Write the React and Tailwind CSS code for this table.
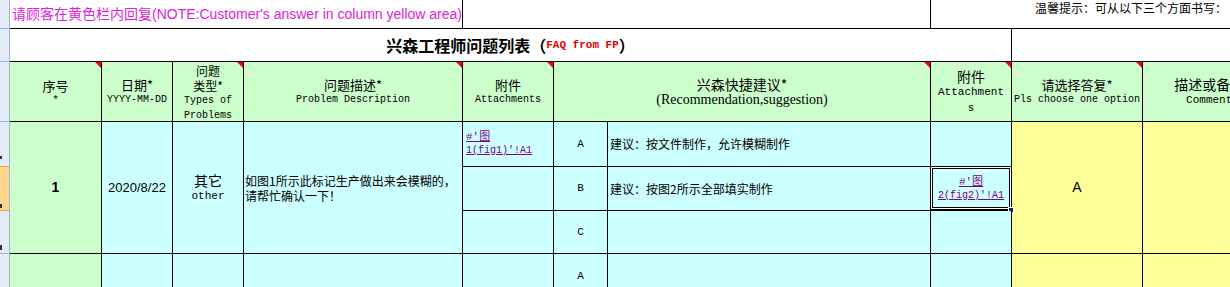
import React from 'react';

const cjk = "font-['Noto_Sans_CJK_SC','Noto_Sans',sans-serif]";
const mono = "font-['Liberation_Mono','Noto_Sans_CJK_SC',monospace]";
const arial = "font-['Liberation_Sans','Noto_Sans_CJK_SC',sans-serif]";
const serif = "font-['Liberation_Serif','Noto_Sans_CJK_SC',serif]";

const cell = 'relative border-r border-b border-black overflow-hidden';
const head = `${cell} bg-[#ccffcc] flex flex-col items-center justify-center text-center text-black`;
const blue = `${cell} bg-[#ccffff]`;
const yellow = `${cell} bg-[#ffff99]`;

// red comment marker in the corner
const Note = () => (
  <span className="absolute top-0 right-0 w-0 h-0 border-l-[6px] border-l-transparent border-t-[6px] border-t-[#ff0000]" />
);

const Link = ({ b, center }) => (
  <div className={`flex flex-col ${center ? 'items-center' : 'items-start'} text-[#800080] underline leading-[14px]`}>
    <span className={`${mono} text-[11px]`}>#'图</span>
    <span className={`${mono} text-[10px]`}>{b}</span>
  </div>
);

const Letter = ({ v }) => (
  <div className={`${blue} flex items-center justify-center ${mono} text-[11px]`}>{v}</div>
);

const GroupRow = ({ first }) => (
  <>
    <div className={`${cell} bg-[#ccffcc] row-span-3 flex items-center justify-center ${arial} font-bold text-[14px]`}>
      {first && '1'}
    </div>
    <div className={`${blue} row-span-3 flex items-center justify-center ${arial} text-[13px]`}>
      {first && '2020/8/22'}
    </div>
    <div className={`${blue} row-span-3 flex flex-col items-center justify-center leading-[16px]`}>
      {first && (
        <>
          <span className={`${cjk} text-[14px]`}>其它</span>
          <span className={`${mono} text-[11px]`}>other</span>
        </>
      )}
    </div>
    <div className={`${blue} row-span-3 flex flex-col justify-center pl-px ${cjk} text-[12px] leading-[15px]`}>
      {first && (
        <>
          <span>如图1所示此标记生产做出来会模糊的，</span>
          <span>请帮忙确认一下！</span>
        </>
      )}
    </div>
    <div className={`${blue} flex items-center pl-[3px]`}>
      {first && <Link b="1(fig1)'!A1" />}
    </div>
    <Letter v="A" />
    <div className={`${blue} flex items-center pl-[2px] ${cjk} text-[12px]`}>
      {first && '建议：按文件制作，允许模糊制作'}
    </div>
    <div className={blue} />
    <div className={`${yellow} row-span-3 flex items-center justify-center ${arial} text-[14px]`}>
      {first && 'A'}
    </div>
    <div className={`${yellow} row-span-3`} />

    <div className={blue} />
    <Letter v="B" />
    <div className={`${blue} flex items-center pl-[2px] ${cjk} text-[12px]`}>
      {first && '建议：按图2所示全部填实制作'}
    </div>
    <div className={`${blue} overflow-visible flex items-center justify-center`}>
      {first && (
        <>
          <Link b="2(fig2)'!A1" center />
          {/* selected cell frame */}
          <div className="absolute -left-px -top-px -right-px bottom-0 border border-black">
            <div className="h-full border border-white">
              <div className="h-full border border-black" />
            </div>
          </div>
          <div className="absolute -right-[3px] -bottom-[3px] w-[6px] h-[6px] bg-[#202060] border border-white" />
        </>
      )}
    </div>

    <div className={blue} />
    <Letter v="C" />
    <div className={blue} />
    <div className={blue} />
  </>
);

export default function App() {
  return (
    <div className="w-[1230px] h-[287px] overflow-hidden bg-white flex text-black">
      {/* row header strip */}
      <div className="w-[10px] shrink-0 flex flex-col bg-[#e4ecf7] border-r border-[#9eb6ce]">
        <div className="h-[29px] shrink-0 border-b border-[#9eb6ce]" />
        <div className="h-[33px] shrink-0 border-b border-[#9eb6ce]" />
        <div className="h-[60px] shrink-0 border-b border-[#9eb6ce]" />
        <div className="h-[44px] shrink-0 flex items-end pb-[7px]">
          <div className="w-[2px] h-[3px] bg-[#333]" />
        </div>
        <div className="h-[45px] shrink-0 flex items-end pb-[2px] bg-[#ffd58d] border-y border-[#f2a144]">
          <div className="w-[2px] h-[4px] bg-[#333]" />
        </div>
        <div className="h-[43px] shrink-0 flex items-end pb-[3px] border-b border-[#9eb6ce]">
          <div className="w-[2px] h-[5px] bg-[#333]" />
        </div>
        <div className="flex-1" />
      </div>

      <div className="shrink-0 grid grid-cols-[92px_71px_71px_219px_91px_54px_323px_81px_131px_140px] grid-rows-[29px_33px_60px_45px_44px_43px_45px_44px_43px]">
        {/* row 1 */}
        <div className={`${cell} col-span-4 flex items-center pl-[2px] ${arial} text-[14px] text-[#dd22dd] whitespace-nowrap`}>
          请顾客在黄色栏内回复(NOTE:Customer's answer in column yellow area)
        </div>
        <div className={`${cell} col-span-3`} />
        <div className={`relative border-b border-black col-span-3 pl-[104px] ${cjk} text-[12px] leading-[15px] whitespace-nowrap overflow-hidden`}>
          温馨提示：可从以下三个方面书写：
        </div>

        {/* row 2 title */}
        <div className={`${cell} col-span-8 flex items-center justify-center whitespace-nowrap`}>
          <span className={`${cjk} font-bold text-[16px]`}>兴森工程师问题列表（</span>
          <span className={`${mono} font-bold text-[11px] text-[#dd0000]`}>FAQ from FP</span>
          <span className={`${cjk} font-bold text-[16px]`}>）</span>
        </div>
        <div className="col-span-2 border-b border-black" />

        {/* row 3 header */}
        <div className={`${head} leading-[15px] pt-[2px]`}>
          <Note />
          <span className={`${cjk} text-[13px]`}>序号</span>
          <span className={`${mono} text-[11px]`}>*</span>
        </div>
        <div className={`${head} leading-[15px]`}>
          <span className={`${cjk} text-[13px]`}>日期*</span>
          <span className={`${mono} text-[10px]`}>YYYY-MM-DD</span>
        </div>
        <div className={`${head} leading-[15px] pt-[2px]`}>
          <Note />
          <span className={`${cjk} text-[12px]`}>问题</span>
          <span className={`${cjk} text-[12px]`}>类型*</span>
          <span className={`${mono} text-[10px]`}>Types of</span>
          <span className={`${mono} text-[10px]`}>Problems</span>
        </div>
        <div className={`${head} leading-[15px]`}>
          <Note />
          <span className={`${cjk} text-[13px]`}>问题描述*</span>
          <span className={`${mono} text-[10px]`}>Problem Description</span>
        </div>
        <div className={`${head} leading-[15px]`}>
          <Note />
          <span className={`${cjk} text-[13px]`}>附件</span>
          <span className={`${mono} text-[10px]`}>Attachments</span>
        </div>
        <div className={`${head} col-span-2 leading-[16px]`}>
          <Note />
          <span className={`${cjk} text-[14px]`}>兴森快捷建议*</span>
          <span className={`${serif} text-[14px]`}>(Recommendation,suggestion)</span>
        </div>
        <div className={`${head} leading-[16px]`}>
          <Note />
          <span className={`${cjk} text-[14px]`}>附件</span>
          <span className={`${mono} text-[11px]`}>Attachment</span>
          <span className={`${mono} text-[11px]`}>s</span>
        </div>
        <div className={`${head} leading-[15px]`}>
          <Note />
          <span className={`${cjk} text-[13px]`}>请选择答复*</span>
          <span className={`${mono} text-[10px]`}>Pls choose one option</span>
        </div>
        <div className={`${head} leading-[16px] whitespace-nowrap`}>
          <span className={`${cjk} text-[14px]`}>描述或备注*</span>
          <span className={`${mono} text-[11px]`}>Comments</span>
        </div>

        <GroupRow first />
        <GroupRow />
      </div>
    </div>
  );
}
